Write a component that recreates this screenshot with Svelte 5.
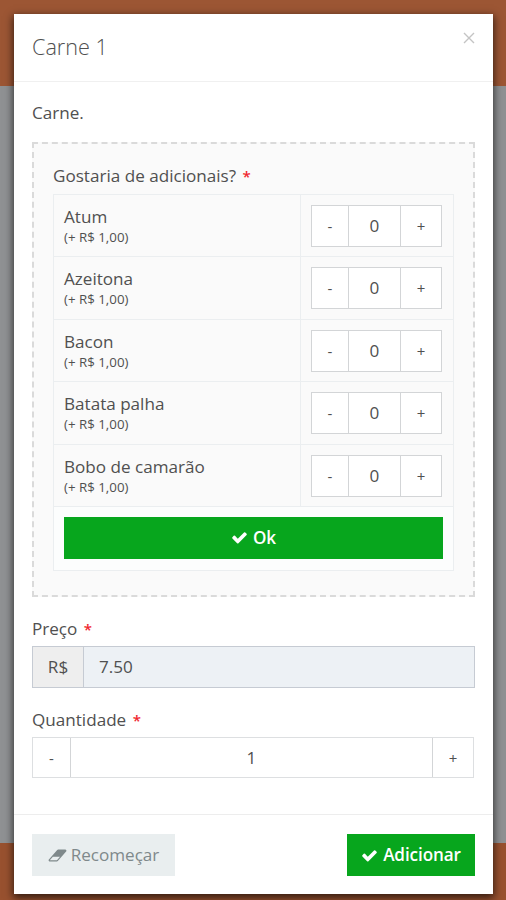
<script>
  const extras = $state([
    { name: 'Atum', quantity: 0 },
    { name: 'Azeitona', quantity: 0 },
    { name: 'Bacon', quantity: 0 },
    { name: 'Batata palha', quantity: 0 },
    { name: 'Bobo de camarão', quantity: 0 }
  ]);
  let quantity = $state(1);
</script>

{#snippet check()}
  <svg class="check" viewBox="0 0 1792 1792" aria-hidden="true"><path d="M1671 566q0 40-28 68l-724 724-136 136q-28 28-68 28t-68-28l-136-136-362-362q-28-28-28-68t28-68l136-136q28-28 68-28t68 28l294 295 656-657q28-28 68-28t68 28l136 136q28 28 28 68z" /></svg>
{/snippet}

<div class="page">
  <div class="modal">
    <header>
      <h1>Carne 1</h1>
      <button class="close" aria-label="Fechar">
        <svg viewBox="0 0 12 12"><path d="M1 1l10 10M11 1L1 11" /></svg>
      </button>
    </header>
    <main>
      <p class="description">Carne.</p>
      <section class="extras">
        <div class="label">Gostaria de adicionais? <b>*</b></div>
        <div class="table">
          {#each extras as item}
            <div class="row">
              <div class="info">
                <span class="name">{item.name}</span>
                <span class="cost">(+ R$ 1,00)</span>
              </div>
              <div class="cell">
                <div class="stepper">
                  <button onclick={() => (item.quantity = Math.max(0, item.quantity - 1))}>-</button>
                  <output>{item.quantity}</output>
                  <button onclick={() => item.quantity++}>+</button>
                </div>
              </div>
            </div>
          {/each}
          <div class="confirm">
            <button class="green">{@render check()}<span>Ok</span></button>
          </div>
        </div>
      </section>
      <div class="label price-label">Preço <b>*</b></div>
      <div class="price"><span class="currency">R$</span><span class="value">7.50</span></div>
      <div class="label quantity-label">Quantidade <b>*</b></div>
      <div class="stepper wide">
        <button onclick={() => (quantity = Math.max(1, quantity - 1))}>-</button>
        <output>{quantity}</output>
        <button onclick={() => quantity++}>+</button>
      </div>
    </main>
    <footer>
      <button class="reset">
        <svg viewBox="0 0 2048 1792" aria-hidden="true"><path d="M960 1408l336-384h-768l-336 384h768zm1013-1077q15 34 9.5 71.5t-30.5 65.5l-896 1024q-38 44-96 44h-768q-38 0-69.5-20.5t-47.5-54.5q-15-34-9.5-71.5t30.5-65.5l896-1024q38-44 96-44h768q38 0 69.5 20.5t47.5 54.5z" /></svg>
        <span>Recomeçar</span>
      </button>
      <button class="green add">{@render check()}<span>Adicionar</span></button>
    </footer>
  </div>
</div>

<style>
  :global(body) { margin: 0; overflow: hidden; }
  .page, .page * { box-sizing: border-box; }
  .page {
    height: 900px;
    padding: 14px 13px 6px 14px;
    background: linear-gradient(#9c5634 0 86px, #8f9193 86px 843px, #98512f 843px);
    font-family: "Open Sans", "Noto Sans", sans-serif;
    font-size: 17.1px;
    line-height: 24px;
    color: #505050;
  }
  button {
    margin: 0;
    padding: 0;
    border: 0;
    font: inherit;
    color: inherit;
    display: flex;
    align-items: center;
    justify-content: center;
  }
  .modal {
    height: 880px;
    display: flex;
    flex-direction: column;
    background: #fff;
    box-shadow: 0 3px 8px 1px rgba(0, 0, 0, .65);
  }
  header {
    height: 68px;
    display: flex;
    justify-content: space-between;
    padding: 18px 18px 0 18px;
    border-bottom: 1px solid #f0f0f0;
  }
  h1 { margin: 0; font-size: 21.6px; line-height: 30px; font-weight: 300; }
  .close { width: 12px; height: 12px; background: none; }
  .close svg { width: 12px; height: 12px; fill: none; stroke: #c4c4c4; stroke-width: 1.4; }
  main { flex: 1; padding: 19px 18px 0 18px; }
  .description { margin: 0; }
  .extras {
    width: 443px;
    height: 455px;
    margin-top: 17px;
    padding: 20px 19px;
    border: 2px dashed #dadada;
    background: #fafafa;
  }
  .label b { margin-left: 2px; color: #f0262e; font-size: 15px; font-weight: 600; }
  .table { width: 401px; margin-top: 6px; border: 1px solid #ebeef0; }
  .extras .label { height: 24px; }
  .row { height: 62.4px; display: flex; border-bottom: 1px solid #ebeef0; }
  .info {
    width: 247px;
    padding: 10px;
    display: flex;
    flex-direction: column;
    border-right: 1px solid #ebeef0;
  }
  .name { line-height: 24px; }
  .cost { font-size: 13.3px; line-height: 17px; }
  .cell { padding: 10px; }
  .stepper {
    width: 131px;
    height: 42px;
    display: flex;
    border: 1px solid #d3d5d7;
    background: #fff;
  }
  .stepper button { width: 36px; background: #fff; font-size: 15px; }
  .stepper button:last-child { width: 40px; }
  .stepper output {
    flex: 1;
    display: flex;
    align-items: center;
    justify-content: center;
    border: solid #d3d5d7;
    border-width: 0 1px;
  }
  .confirm { height: 63px; padding: 10px 10px 0; background: #fcfdfd; }
  .green { color: #fff; background: #07a61d; font-weight: 600; gap: 5px; }
  .green span { letter-spacing: -0.1px; }
  .check { width: 17px; height: 17px; fill: currentColor; }
  .confirm .green { width: 379px; height: 42px; }
  .price-label { margin-top: 20px; }
  .price { width: 443px; height: 42px; display: flex; margin-top: 5px; border: 1px solid #c6cbd3; }
  .currency {
    width: 51px;
    display: flex;
    align-items: center;
    justify-content: center;
    background: #eee;
    border-right: 1px solid #c6cbd3;
  }
  .value { flex: 1; padding-left: 15px; display: flex; align-items: center; background: #edf1f5; }
  .quantity-label { margin-top: 20px; }
  .stepper.wide { width: 442px; height: 41px; margin-top: 5px; border-color: #dddfe1; }
  .stepper.wide button:first-child { width: 37px; }
  footer {
    height: 80px;
    padding: 19px 18px 0;
    display: flex;
    justify-content: space-between;
    border-top: 1px solid #ededed;
  }
  .reset { width: 143px; height: 42px; gap: 4px; color: #7f898b; background: #e9eeef; }
  .reset svg { width: 19px; height: 17px; fill: currentColor; }
  .add { width: 128px; height: 42px; }
</style>
